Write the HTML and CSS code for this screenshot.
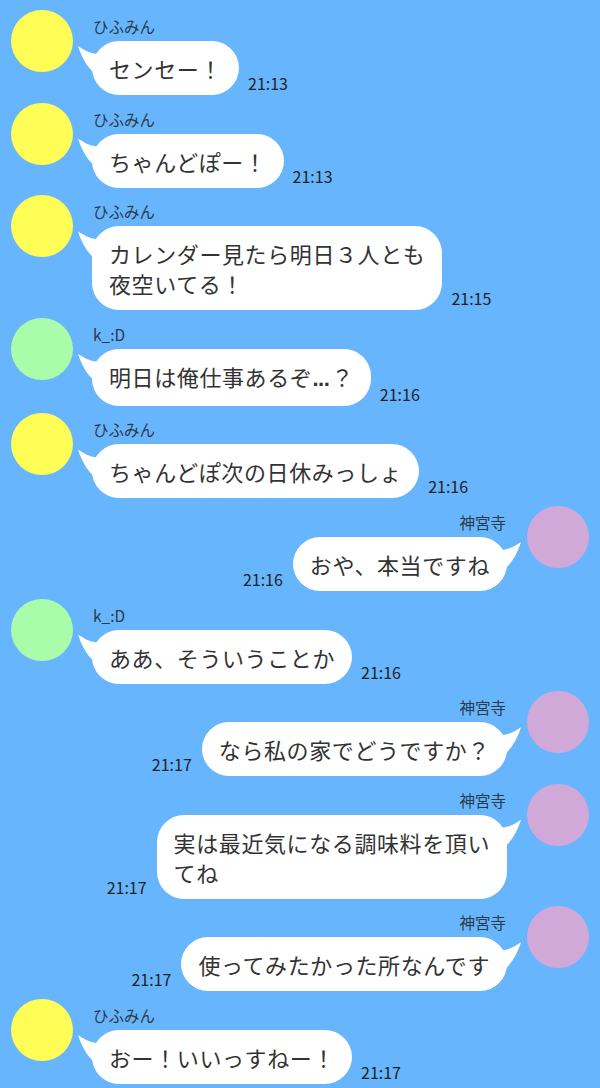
FILE: index.html
```html
<!DOCTYPE html>
<html lang="ja">
<head>
  <meta charset="UTF-8">
  <meta name="viewport" content="width=device-width, initial-scale=1.0">
  <title>トーク</title>
  <link rel="stylesheet" href="styles.css">
</head>
<body>
  <div class="chat">

    <div class="msg">
      <div class="avatar yellow"></div>
      <div class="body">
        <div class="name">ひふみん</div>
        <div class="line">
          <div class="bubble">センセー！</div>
          <div class="time">21:13</div>
        </div>
      </div>
    </div>

    <div class="msg">
      <div class="avatar yellow"></div>
      <div class="body">
        <div class="name">ひふみん</div>
        <div class="line">
          <div class="bubble">ちゃんどぽー！</div>
          <div class="time">21:13</div>
        </div>
      </div>
    </div>

    <div class="msg">
      <div class="avatar yellow"></div>
      <div class="body">
        <div class="name">ひふみん</div>
        <div class="line">
          <div class="bubble">カレンダー見たら明日３人とも<br>夜空いてる！</div>
          <div class="time">21:15</div>
        </div>
      </div>
    </div>

    <div class="msg">
      <div class="avatar green"></div>
      <div class="body">
        <div class="name">k_:D</div>
        <div class="line">
          <div class="bubble">明日は俺仕事あるぞ<span class="dots">...</span>？</div>
          <div class="time">21:16</div>
        </div>
      </div>
    </div>

    <div class="msg">
      <div class="avatar yellow"></div>
      <div class="body">
        <div class="name">ひふみん</div>
        <div class="line">
          <div class="bubble">ちゃんどぽ次の日休みっしょ</div>
          <div class="time">21:16</div>
        </div>
      </div>
    </div>

    <div class="msg mine">
      <div class="avatar purple"></div>
      <div class="body">
        <div class="name">神宮寺</div>
        <div class="line">
          <div class="bubble">おや、本当ですね</div>
          <div class="time">21:16</div>
        </div>
      </div>
    </div>

    <div class="msg">
      <div class="avatar green"></div>
      <div class="body">
        <div class="name">k_:D</div>
        <div class="line">
          <div class="bubble">ああ、そういうことか</div>
          <div class="time">21:16</div>
        </div>
      </div>
    </div>

    <div class="msg mine">
      <div class="avatar purple"></div>
      <div class="body">
        <div class="name">神宮寺</div>
        <div class="line">
          <div class="bubble">なら私の家でどうですか？</div>
          <div class="time">21:17</div>
        </div>
      </div>
    </div>

    <div class="msg mine">
      <div class="avatar purple"></div>
      <div class="body">
        <div class="name">神宮寺</div>
        <div class="line">
          <div class="bubble">実は最近気になる調味料を頂い<br>てね</div>
          <div class="time">21:17</div>
        </div>
      </div>
    </div>

    <div class="msg mine">
      <div class="avatar purple"></div>
      <div class="body">
        <div class="name">神宮寺</div>
        <div class="line">
          <div class="bubble">使ってみたかった所なんです</div>
          <div class="time">21:17</div>
        </div>
      </div>
    </div>

    <div class="msg">
      <div class="avatar yellow"></div>
      <div class="body">
        <div class="name">ひふみん</div>
        <div class="line">
          <div class="bubble">おー！いいっすねー！</div>
          <div class="time">21:17</div>
        </div>
      </div>
    </div>

  </div>
</body>
</html>
```

FILE: styles.css
```css
body {
  font-family: "Noto Sans CJK JP", "Noto Sans", sans-serif;
  background-color: #67b5fd;
  margin: 0;
  padding: 0;
  color: #333;
}

.chat {
  display: flex;
  flex-direction: column;
  gap: 7.6px;
  padding: 10px 11px 0 11px;
}

.msg {
  display: flex;
  align-items: flex-start;
  gap: 19px;
}

.msg.mine {
  flex-direction: row-reverse;
  gap: 20px;
}

.avatar {
  width: 62px;
  height: 62px;
  border-radius: 50%;
  flex-shrink: 0;
}

.yellow { background-color: #fefe57; }
.green { background-color: #a9fca9; }
.purple { background-color: #d0a9d9; }

.body {
  display: flex;
  flex-direction: column;
  align-items: flex-start;
}

.mine .body {
  align-items: flex-end;
}

.name {
  font-size: 15.5px;
  line-height: 20px;
  padding: 6px 1px 5px 1px;
  color: #2c3a48;
}

.line {
  display: flex;
  align-items: flex-end;
  gap: 9px;
}

.mine .line {
  flex-direction: row-reverse;
  gap: 10px;
}

.bubble {
  position: relative;
  background-color: #fff;
  border-radius: 27px;
  padding: 12px 17px;
  font-size: 22px;
  line-height: 30px;
  letter-spacing: 0.6px;
  color: #333;
  white-space: nowrap;
}

.dots {
  font-family: "Liberation Sans", sans-serif;
  font-weight: bold;
  letter-spacing: -0.5px;
  margin-right: 2px;
}

/* the little tail pointing at the avatar */
.bubble::before {
  content: "";
  position: absolute;
  top: 4px;
  left: -15px;
  width: 22px;
  height: 32px;
  background-color: #fff;
  clip-path: path("M1 1 C 7 5, 12 8, 20 9 L 21 31 C 12 25, 5 14, 1 1 Z");
}

.mine .bubble::before {
  left: auto;
  right: -15px;
  transform: scaleX(-1);
}

.time {
  font-size: 16px;
  line-height: 20px;
  margin-bottom: 2px;
  color: #222;
}
```
